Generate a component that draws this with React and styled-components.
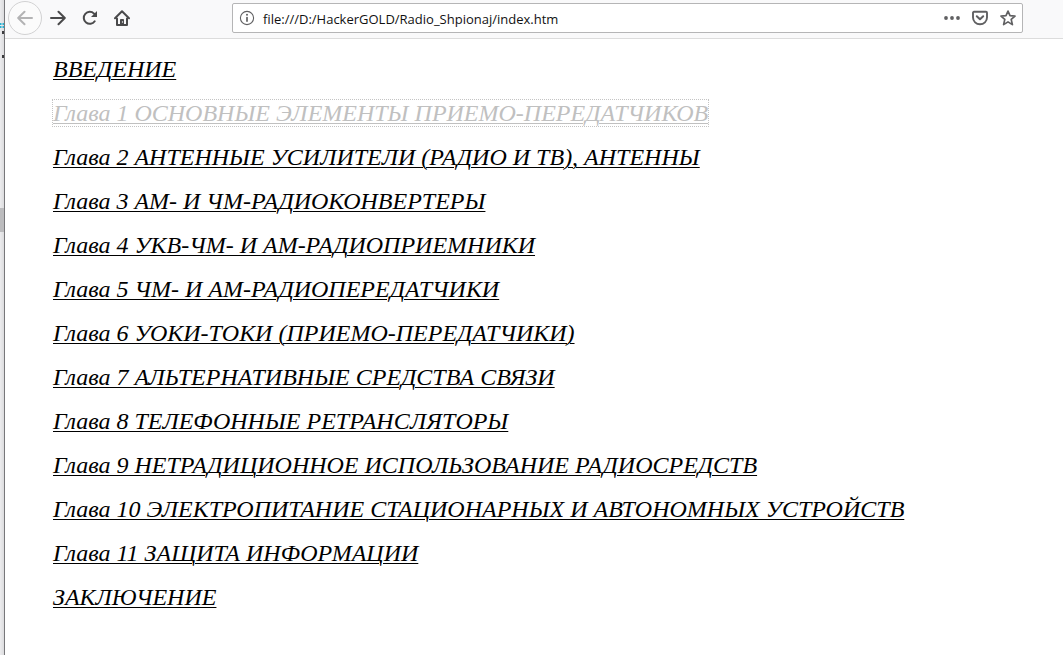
import React from "react";
import styled, { createGlobalStyle } from "styled-components";

const GlobalStyle = createGlobalStyle`
  * {
    box-sizing: border-box;
  }

  body {
    margin: 0;
    background: #fff;
    overflow: hidden;
  }
`;

const Screen = styled.div`
  display: flex;
  width: 1063px;
  height: 655px;
  overflow: hidden;
`;

const Edge = styled.div`
  flex: none;
  width: 5px;
  height: 655px;
  background: linear-gradient(90deg, #ececee, #dcdcde);
  border-right: 1px solid #77777a;
`;

const Browser = styled.div`
  flex: 1;
  display: flex;
  flex-direction: column;
`;

const Toolbar = styled.div`
  display: flex;
  align-items: center;
  height: 39px;
  padding: 0 40px 3px 3px;
  background: #f9f9fa;
  border-bottom: 1px solid #dcdcdc;
`;

const BackButton = styled.div`
  display: flex;
  align-items: center;
  justify-content: center;
  width: 34px;
  height: 34px;
  border: 1px solid #d2d2d3;
  border-radius: 50%;
  background: #fbfbfb;
  color: #b3b3b4;
`;

const ToolButton = styled.div`
  display: flex;
  align-items: center;
  justify-content: center;
  width: 32px;
  height: 32px;
  color: #4a4a4b;
`;

const AddressBar = styled.div`
  display: flex;
  align-items: center;
  width: 791px;
  height: 30px;
  margin-left: 94px;
  padding: 0 6px;
  background: #fff;
  border: 1px solid #b5b5b6;
  border-radius: 2px;
  color: #606062;
`;

const Url = styled.span`
  flex: 1;
  margin-left: 8px;
  padding-top: 2px;
  font-family: "Open Sans", "Noto Sans", sans-serif;
  font-size: 13px;
  line-height: 18px;
  color: #111;
  white-space: nowrap;
`;

const BarActions = styled.div`
  display: flex;
  align-items: center;
  gap: 12px;
`;

const Icon = styled.svg`
  display: block;
  width: 16px;
  height: 16px;
  fill: none;
  stroke: currentColor;
  stroke-width: 2;
  stroke-linecap: round;
  stroke-linejoin: round;
`;

const Contents = styled.ul`
  margin: 0;
  padding: 8px 0 0 48px;
  list-style: none;
`;

const Row = styled.li`
  display: flex;
  align-items: center;
  height: 44px;
`;

const Chapter = styled.a`
  height: 26px;
  font-family: "Liberation Serif", "Times New Roman", serif;
  font-size: 24px;
  font-style: italic;
  line-height: 26px;
  color: ${(props) => (props.$active ? "#c0c0c0" : "#000")};
  text-decoration: underline;
  text-decoration-thickness: 1px;
  text-underline-offset: 2px;
  outline: ${(props) => (props.$active ? "1px dotted #c4c4c4" : "none")};
  white-space: nowrap;
`;

const chapters = [
  { title: "ВВЕДЕНИЕ" },
  { title: "Глава 1 ОСНОВНЫЕ ЭЛЕМЕНТЫ ПРИЕМО-ПЕРЕДАТЧИКОВ", active: true },
  { title: "Глава 2 АНТЕННЫЕ УСИЛИТЕЛИ (РАДИО И ТВ), АНТЕННЫ" },
  { title: "Глава 3 АМ- И ЧМ-РАДИОКОНВЕРТЕРЫ" },
  { title: "Глава 4 УКВ-ЧМ- И АМ-РАДИОПРИЕМНИКИ" },
  { title: "Глава 5 ЧМ- И АМ-РАДИОПЕРЕДАТЧИКИ" },
  { title: "Глава 6 УОКИ-ТОКИ (ПРИЕМО-ПЕРЕДАТЧИКИ)" },
  { title: "Глава 7 АЛЬТЕРНАТИВНЫЕ СРЕДСТВА СВЯЗИ" },
  { title: "Глава 8 ТЕЛЕФОННЫЕ РЕТРАНСЛЯТОРЫ" },
  { title: "Глава 9 НЕТРАДИЦИОННОЕ ИСПОЛЬЗОВАНИЕ РАДИОСРЕДСТВ" },
  { title: "Глава 10 ЭЛЕКТРОПИТАНИЕ СТАЦИОНАРНЫХ И АВТОНОМНЫХ УСТРОЙСТВ" },
  { title: "Глава 11 ЗАЩИТА ИНФОРМАЦИИ" },
  { title: "ЗАКЛЮЧЕНИЕ" },
];

// slice of the desktop that stays visible left of the window
const DesktopEdge = () => (
  <Edge>
    <svg width="4" height="655" viewBox="0 0 4 655">
      <path d="M0 23h1.500v2H0zM2.500 23H4v2H2.500zM0 26h1.500v2H0zM2.500 26H4v2H2.500z" fill="#27b1d3" />
      <path d="M2 31h2v3H2zM2 55h2v3H2z" fill="#3c3c3e" />
      <path d="M0 208h4v24H0z" fill="#bcbcbe" />
    </svg>
  </Edge>
);

const App = () => {
  return (
    <>
      <GlobalStyle />
      <Screen>
        <DesktopEdge />
        <Browser>
          <Toolbar>
            <BackButton>
              <Icon viewBox="0 0 16 16">
                <path d="M15 8H1.500M7.500 1.800L1.200 8l6.300 6.200" />
              </Icon>
            </BackButton>
            <ToolButton>
              <Icon viewBox="0 0 16 16">
                <path d="M1 8h13.500M8.500 1.800L14.800 8l-6.300 6.200" />
              </Icon>
            </ToolButton>
            <ToolButton>
              <Icon viewBox="0 0 16 16">
                <path d="M12.700 11.300A6 6 0 1 1 12 3.600L13.500 5" />
                <path d="M15 1v6H9z" fill="currentColor" stroke="none" />
              </Icon>
            </ToolButton>
            <ToolButton>
              <Icon viewBox="0 0 16 16">
                <path d="M1 8.300L8 1.300l7 7M3 8.500V15h10V8.500" />
                <path d="M6 15V9.800c0-.5.300-.8.800-.8h2.400c.5 0 .8.300.8.800V15z" fill="currentColor" stroke="none" />
                <circle cx="8.500" cy="12" r="0.700" fill="#f9f9fa" stroke="none" />
              </Icon>
            </ToolButton>
            <AddressBar>
              <Icon viewBox="0 0 16 16">
                <circle cx="8" cy="8" r="6.600" strokeWidth="1.100" />
                <path d="M8 7.500v3.600" strokeWidth="1.700" />
                <circle cx="8" cy="4.700" r="1" fill="currentColor" stroke="none" />
              </Icon>
              <Url>file:///D:/HackerGOLD/Radio_Shpionaj/index.htm</Url>
              <BarActions>
                <Icon viewBox="0 0 16 16">
                  <g fill="currentColor" stroke="none">
                    <circle cx="2" cy="8" r="1.900" />
                    <circle cx="8" cy="8" r="1.900" />
                    <circle cx="14" cy="8" r="1.900" />
                  </g>
                </Icon>
                <Icon viewBox="0 0 16 16">
                  <path d="M2 1.800h12c.6 0 1 .4 1 1V7.500a7 6.800 0 0 1-14 0V2.800c0-.6.4-1 1-1z" strokeWidth="1.900" />
                  <path d="M4.800 6.200L8 9.300l3.200-3.100" />
                </Icon>
                <Icon viewBox="0 0 16 16">
                  <path
                    d="M8 1.100l2 4.600 5 .4-3.800 3.300 1.200 5.200L8 11.900l-4.400 2.700 1.200-5.200L1 6.100l5-.4z"
                    strokeWidth="1.700"
                  />
                </Icon>
              </BarActions>
            </AddressBar>
          </Toolbar>
          <Contents>
            {chapters.map((chapter) => (
              <Row key={chapter.title}>
                <Chapter $active={chapter.active}>{chapter.title}</Chapter>
              </Row>
            ))}
          </Contents>
        </Browser>
      </Screen>
    </>
  );
};

export default App;
